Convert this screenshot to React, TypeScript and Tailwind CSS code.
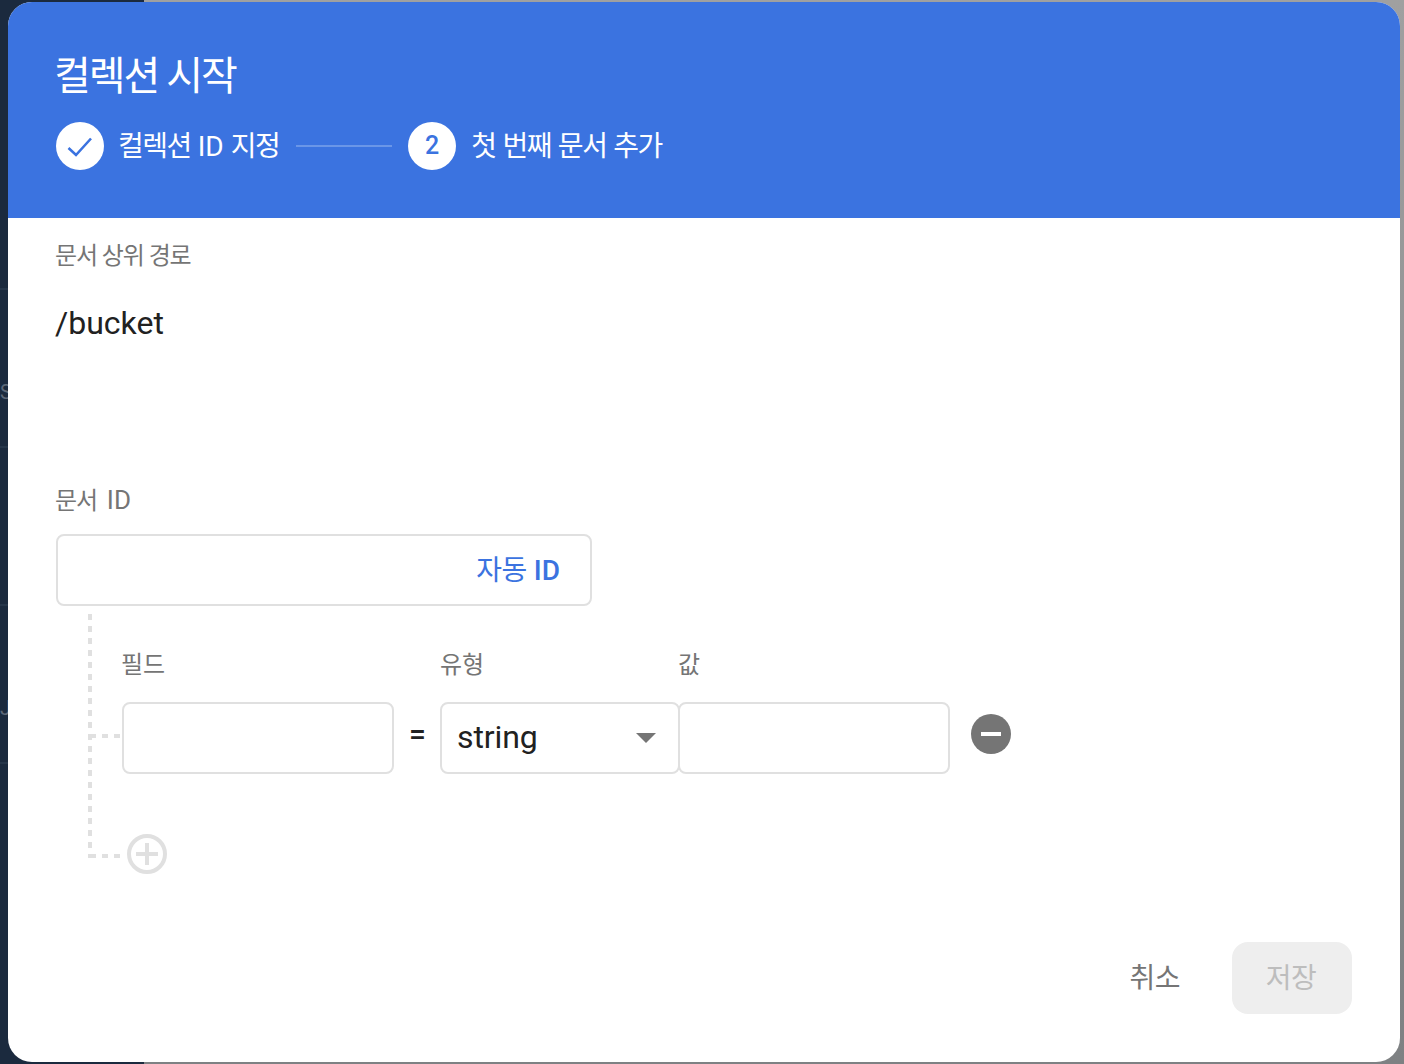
import React from "react";

const font = { fontFamily: '"Roboto", "Noto Sans CJK KR", sans-serif' };

function Step({ circle, children, labelClass }: { circle: React.ReactNode; children: React.ReactNode; labelClass: string }) {
  return (
    <div className="flex items-center gap-[15px]">
      <div className="flex h-12 w-12 items-center justify-center rounded-full bg-white text-[25px] font-medium text-[#3b73e0]">
        {circle}
      </div>
      <span className={labelClass}>{children}</span>
    </div>
  );
}

const label = "text-[24px] leading-8 tracking-[-1.1px] text-[#757575] pt-px";
const rowLabel = "text-[24px] leading-8 text-[#757575] pt-px";
const stepLabel = "pt-[2px] text-[28px] leading-9 tracking-[-1.5px] [word-spacing:1.5px] text-white";

export default function App() {
  return (
    <div className="relative flex h-[1064px] w-[1404px] overflow-hidden" style={font}>
      <div className="w-[144px] bg-[#1b2a3e] pt-[288px] text-[20px] leading-none text-[#5d6878]">
        {["S", "", "J", ""].map((letter, i) => (
          <div key={i} className="flex h-[158px] items-center border-t-2 border-[#26364a] pt-12">
            {letter}
          </div>
        ))}
      </div>
      <div className="flex-1 bg-gradient-to-b from-[#a0a0a0] to-[#7e8183]" />

      <div className="absolute left-2 top-[2px] flex h-[1060px] w-[1392px] flex-col overflow-hidden rounded-[24px] bg-white">
        <header className="bg-[#3b73e0] px-12 pb-12 pt-[50px]">
          <h1 className="-ml-[2px] pt-[6px] text-[40px] font-normal leading-[38px] tracking-[-2px] text-white">컬렉션 시작</h1>
          <div className="mt-[26px] flex items-center gap-4">
            <Step
              labelClass={`-ml-px ${stepLabel}`}
              circle={
                <svg width="48" height="48" viewBox="0 0 48 48" fill="none">
                  <path d="M12.5 26l7.5 7L35 16.5" stroke="#3b73e0" strokeWidth="2.6" />
                </svg>
              }
            >
              컬렉션 <span className="tracking-normal">ID</span> 지정
            </Step>
            <div className="ml-px h-[2px] w-24 bg-[#6a96e8]" />
            <Step labelClass={stepLabel} circle="2">첫 번째 문서 추가</Step>
          </div>
        </header>

        <main className="relative flex-1 px-12 pt-[21px]">
          <div className={`-ml-px ${label}`}>문서 상위 경로</div>
          <div className="-ml-px mt-[29px] text-[32px] leading-[44px] text-[#212121]">/bucket</div>
          <div className={`-ml-px mt-[138px] ${label}`}>
            문서 <span className="ml-[5px] text-[26px] tracking-normal">ID</span>
          </div>
          <div className="mt-[17px] flex h-[72px] w-[536px] items-center justify-end rounded-lg border-2 border-[#e0e0e0] pr-[30px] pt-px text-[28px] text-[#3b73e0]">
            <span className="tracking-[-0.5px]">자동</span>
            <span className="ml-[7px] font-medium">ID</span>
          </div>

          <div className="relative">
            <svg className="absolute left-8 top-2" width="36" height="246" viewBox="0 0 36 246" fill="none" stroke="#e0e0e0" strokeWidth="4">
              <path d="M2 0V244" strokeDasharray="6 6" />
              <path d="M0 122H32" strokeDasharray="8 6 6 6 6" />
              <path d="M0 242H32" strokeDasharray="8 6 6 6 6" />
            </svg>

            <div className="ml-[66px] grid grid-cols-[272px_46px_238px_272px_auto] pt-[42px]">
              <div className={`-ml-px ${rowLabel}`}>필드</div>
              <div />
              <div className={rowLabel}>유형</div>
              <div className={rowLabel}>값</div>
              <div />

              <div className="mt-[21px] h-[72px] rounded-lg border-2 border-[#e0e0e0]" />
              <div className="mt-[21px] flex h-[62px] items-center justify-center pl-px text-[30px] font-medium text-[#212121]">=</div>
              <div className="mt-[21px] flex h-[72px] w-[240px] items-center justify-between rounded-lg border-2 border-[#e0e0e0] pb-[2px] pl-[15px] pr-[22px] text-[32px] tracking-[-0.1px] text-[#212121]">
                <span>string</span>
                <svg className="mt-[2px]" width="20" height="10" viewBox="0 0 20 10">
                  <path d="M0 0h20L10 10z" fill="#757575" />
                </svg>
              </div>
              <div className="mt-[21px] h-[72px] rounded-lg border-2 border-[#e0e0e0]" />
              <div className="ml-[21px] mt-[33px]">
                <svg width="40" height="40" viewBox="0 0 40 40">
                  <circle cx="20" cy="20" r="20" fill="#757575" />
                  <rect x="10" y="18" width="20" height="4" fill="#fff" />
                </svg>
              </div>
            </div>

            <div className="ml-[71px] mt-[60px]">
              <svg width="40" height="40" viewBox="0 0 40 40" fill="none" stroke="#e0e0e0" strokeWidth="4">
                <circle cx="20" cy="20" r="18" />
                <path d="M20 9v22M9 20h22" />
              </svg>
            </div>
          </div>

          <div className="mt-[68px] flex items-center justify-end gap-[52px]">
            <span className="pt-[2px] text-[28px] tracking-[-0.5px] text-[#757575]">취소</span>
            <div className="flex h-[72px] w-[120px] items-center justify-center rounded-2xl bg-[#eeeeee] pr-[2px] pt-[2px] text-[28px] tracking-[-0.5px] text-[#bdbdbd]">
              저장
            </div>
          </div>
        </main>
      </div>
    </div>
  );
}
